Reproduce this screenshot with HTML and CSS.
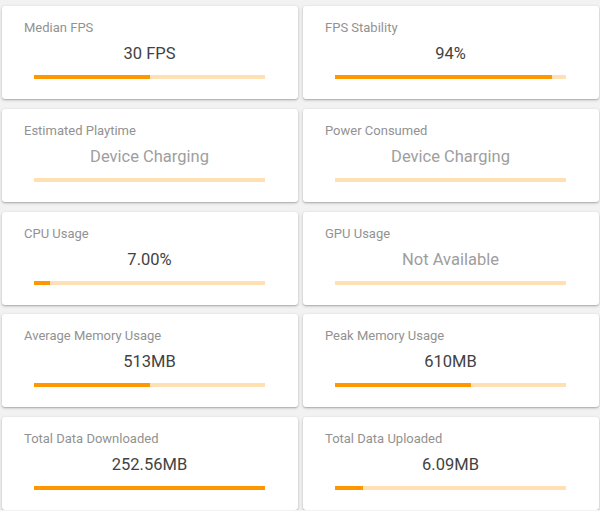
FILE: index.html
```html
<!DOCTYPE html>
<html lang="en">
<head>
    <meta charset="UTF-8">
    <title>Session Stats</title>
    <link rel="stylesheet" href="styles.css">
</head>
<body>
<div id="stats">
    <div class="card">
        <div class="label">Median FPS</div>
        <div class="value">30 FPS</div>
        <div class="bar"><div class="fill" style="width: 50%"></div></div>
    </div>
    <div class="card">
        <div class="label">FPS Stability</div>
        <div class="value">94%</div>
        <div class="bar"><div class="fill" style="width: 94%"></div></div>
    </div>
    <div class="card">
        <div class="label">Estimated Playtime</div>
        <div class="value muted">Device Charging</div>
        <div class="bar"><div class="fill" style="width: 0%"></div></div>
    </div>
    <div class="card">
        <div class="label">Power Consumed</div>
        <div class="value muted">Device Charging</div>
        <div class="bar"><div class="fill" style="width: 0%"></div></div>
    </div>
    <div class="card">
        <div class="label">CPU Usage</div>
        <div class="value">7.00%</div>
        <div class="bar"><div class="fill" style="width: 7%"></div></div>
    </div>
    <div class="card">
        <div class="label">GPU Usage</div>
        <div class="value muted">Not Available</div>
        <div class="bar"><div class="fill" style="width: 0%"></div></div>
    </div>
    <div class="card">
        <div class="label">Average Memory Usage</div>
        <div class="value">513MB</div>
        <div class="bar"><div class="fill" style="width: 50%"></div></div>
    </div>
    <div class="card">
        <div class="label">Peak Memory Usage</div>
        <div class="value">610MB</div>
        <div class="bar"><div class="fill" style="width: 59%"></div></div>
    </div>
    <div class="card">
        <div class="label">Total Data Downloaded</div>
        <div class="value">252.56MB</div>
        <div class="bar"><div class="fill" style="width: 100%"></div></div>
    </div>
    <div class="card">
        <div class="label">Total Data Uploaded</div>
        <div class="value">6.09MB</div>
        <div class="bar"><div class="fill" style="width: 12%"></div></div>
    </div>
</div>
</body>
</html>
```

FILE: styles.css
```css
body {
    margin: 0;
    background: #f2f2f2;
    font-family: Roboto, "Liberation Sans", sans-serif;
    overflow: hidden;
}

#stats {
    display: grid;
    grid-template-columns: 296px 296px;
    grid-auto-rows: 93px;
    column-gap: 5px;
    row-gap: 9.75px;
    padding: 6px 0 0 2px;
}

.card {
    background: #fff;
    border-radius: 3px;
    box-shadow: 0 1px 3px rgba(0, 0, 0, 0.25), 0 1px 1px rgba(0, 0, 0, 0.1);
    padding: 14px 33px 0 22px;
}

.label {
    font-size: 13px;
    line-height: 16px;
    color: #929292;
}

.value {
    margin-top: 8px;
    padding-left: 10px;
    font-size: 16.5px;
    line-height: 20px;
    text-align: center;
    color: #424242;
}

.value.muted {
    color: #9e9e9e;
}

.bar {
    margin: 11px 0 0 10px;
    height: 4px;
    background: #ffe0b2;
}

.fill {
    height: 100%;
    background: #ff9800;
}
```
